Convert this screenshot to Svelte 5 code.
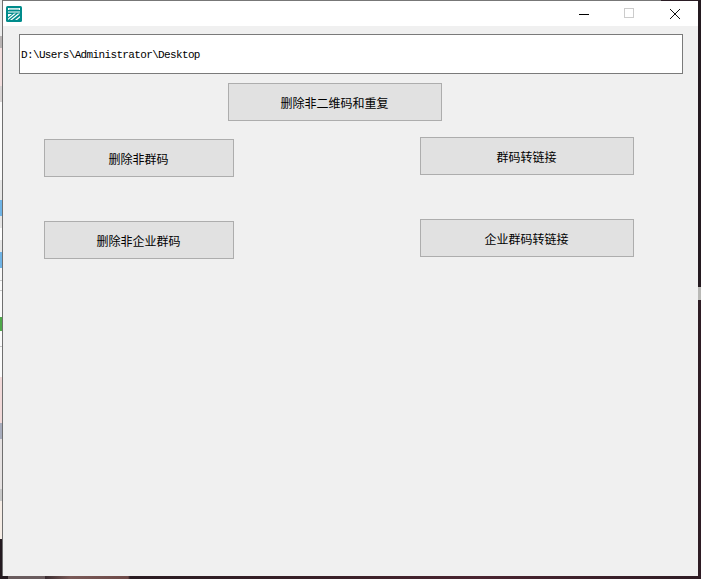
<script>
	const leftButtons = ['删除非群码', '删除非企业群码'];
	const rightButtons = ['群码转链接', '企业群码转链接'];
	// bits of the desktop that show down the left edge of the window
	const strip = [
		{ h: 36, c: '#ececec' },
		{ h: 12, c: '#b9b4b4' },
		{ h: 38, c: '#f3dfdf' },
		{ h: 16, c: '#d9d4d4' },
		{ h: 78, c: '#fbfbfb' },
		{ h: 14, c: '#e6e6e6' },
		{ h: 6, c: '#e6e6e6' },
		{ h: 16, c: '#6fb4e6' },
		{ h: 12, c: '#e6e6e6' },
		{ h: 12, c: '#ffffff' },
		{ h: 12, c: '#e6e6e6' },
		{ h: 16, c: '#6fb4e6' },
		{ h: 12, c: '#f8f8f8' },
		{ h: 1, c: '#c8c8c8' },
		{ h: 9, c: '#fbfbfb' },
		{ h: 1, c: '#c8c8c8' },
		{ h: 26, c: '#fbfbfb' },
		{ h: 14, c: '#4fa94a' },
		{ h: 15, c: '#fbfbfb' },
		{ h: 1, c: '#c8c8c8' },
		{ h: 30, c: '#fbfbfb' },
		{ h: 46, c: '#f1d9d9' },
		{ h: 16, c: '#a8adbd' },
		{ h: 50, c: '#e6e2e2' },
		{ h: 12, c: '#c9c9c9' },
		{ h: 38, c: '#f6ede6' },
		{ h: 38, c: '#241a20' }
	];
</script>

<div class="desktop">
	<div class="strip">
		{#each strip as s}
			<span style="height: {s.h}px; background: {s.c}"></span>
		{/each}
	</div>
	<div class="window">
		<div class="topline"></div>
		<header class="titlebar">
			<svg class="app-icon" width="16" height="16" viewBox="0 0 16 16">
				<rect width="16" height="16" rx="1.5" fill="#008c8c" />
				<rect x="2" y="2" width="12" height="2" fill="#fff" />
				<rect x="3" y="2.8" width="10" height=".6" fill="#008c8c" />
				<path d="M2 6h12" stroke="#fff" />
				<path d="M2 8h4L2 11zM8 7.5h2L2 14v-1.5zM12 7.5h2L6 14H4zM14 10v1.5L11 14H9z" fill="#fff" />
			</svg>
			<div class="controls">
				<svg width="12" height="12" viewBox="0 0 12 12"><path d="M1 6.5h10" stroke="#000" fill="none" /></svg>
				<svg width="11" height="11" viewBox="0 0 11 11"><rect x=".5" y=".5" width="9" height="9" stroke="#ccc" fill="none" /></svg>
				<svg width="12" height="12" viewBox="0 0 12 12"><path d="M1 1l10 10M11 1L1 11" stroke="#111" fill="none" /></svg>
			</div>
		</header>
		<main class="content">
			<div class="path">D:\Users\Administrator\Desktop</div>
			<div class="center">
				<button class="wide">删除非二维码和重复</button>
			</div>
			<div class="columns">
				<div class="col left">
					{#each leftButtons as b}
						<button class="narrow">{b}</button>
					{/each}
				</div>
				<div class="col right">
					{#each rightButtons as b}
						<button class="wide">{b}</button>
					{/each}
				</div>
			</div>
		</main>
	</div>
</div>

<style>
	:global(body) {
		margin: 0;
		background: #1f1820;
	}

	.desktop {
		width: 701px;
		height: 579px;
		overflow: hidden;
		display: flex;
		background:
			linear-gradient(#241a20, #241a20) 698px 0 / 3px 287px no-repeat,
			linear-gradient(#b9b9b6, #b9b9b6) 698px 287px / 3px 13px no-repeat,
			linear-gradient(90deg, #241a20 8px, #6a5c5e 8px, #6a5c5e 45px, #3a2c30 45px, #7a5a58 70px, #6e4a48 128px, #2a1c22 130px, #3a2028 340px, #4a2430 480px, #2e1c24 701px);
	}

	.strip {
		width: 2px;
		display: flex;
		flex-direction: column;
		flex: none;
	}

	.strip span {
		display: block;
		flex: none;
	}

	.window {
		width: 696px;
		height: 576px;
		box-sizing: border-box;
		border-left: 1px solid #6f6f6f;
		display: flex;
		flex-direction: column;
		background: #f0f0f0;
	}

	.topline {
		height: 1px;
		flex: none;
		background: linear-gradient(90deg, #777 658px, #2a1c24 658px);
	}

	.titlebar {
		height: 25px;
		flex: none;
		background: #fff;
		display: flex;
		align-items: center;
		justify-content: space-between;
		padding-left: 3px;
	}

	.controls {
		display: flex;
		align-items: center;
		gap: 34px;
		padding-right: 17px;
	}

	.content {
		padding: 8px 15px 0 16px;
	}

	.path {
		height: 40px;
		box-sizing: border-box;
		border: 1px solid #7a7a7a;
		background: #fff;
		display: flex;
		align-items: center;
		padding: 1px 0 0 1px;
		font: 11px 'Liberation Mono', 'Noto Sans CJK SC', monospace;
		letter-spacing: -0.64px;
		color: #000;
	}

	.center {
		margin-top: 9px;
		padding-left: 209px;
	}

	button {
		display: block;
		height: 38px;
		padding: 0 1px 0 0;
		box-sizing: border-box;
		border: 1px solid #adadad;
		background: #e1e1e1;
		color: #000;
		font: 12px 'Noto Sans CJK SC', sans-serif;
	}

	.wide {
		width: 214px;
	}

	.narrow {
		width: 190px;
	}

	.columns {
		display: flex;
	}

	.col {
		display: flex;
		flex-direction: column;
		gap: 44px;
	}

	.left {
		margin: 18px 0 0 25px;
	}

	.right {
		margin: 16px 0 0 186px;
	}
</style>
